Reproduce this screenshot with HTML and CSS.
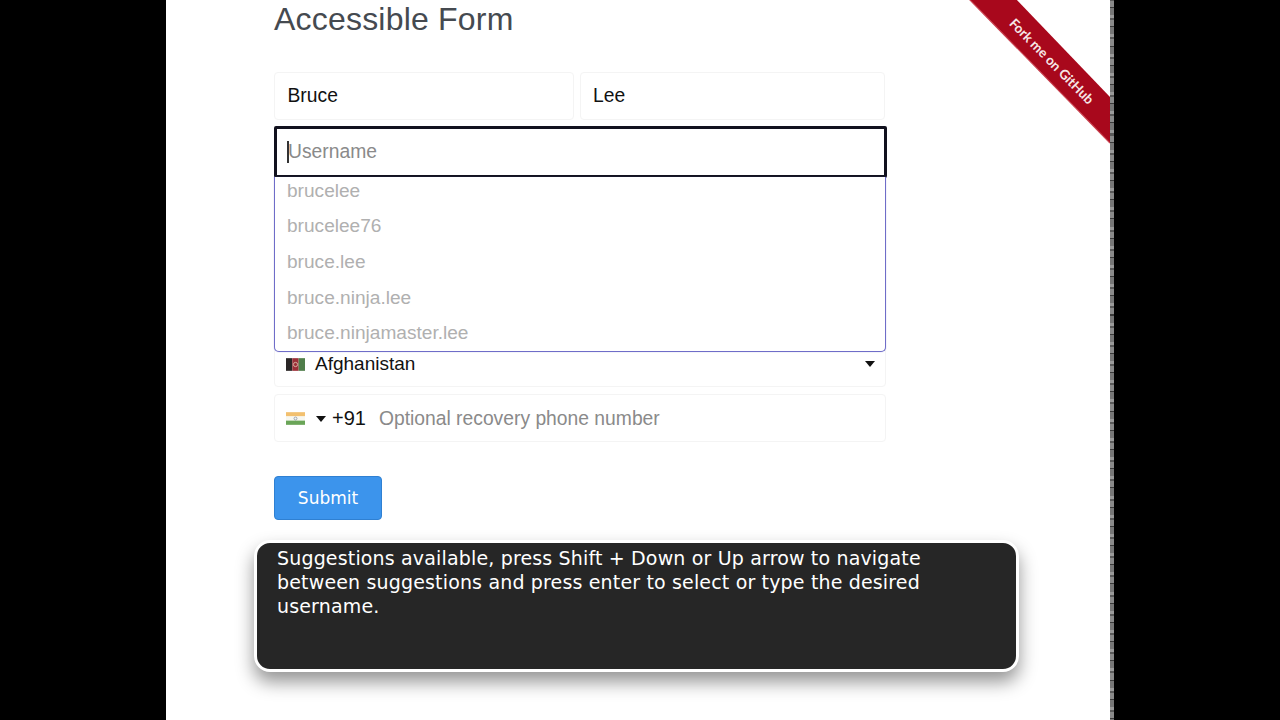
FILE: index.html
```html
<!DOCTYPE html>
<html lang="en">
<head>
<meta charset="utf-8">
<title>Accessible Form</title>
<link rel="stylesheet" href="styles.css">
</head>
<body>
<main class="page">
  <h1 class="title">Accessible Form</h1>
  <form class="form">
    <div class="row">
      <div class="field first-name">Bruce</div>
      <div class="field last-name">Lee</div>
    </div>
    <div class="username-wrap">
      <div class="username"><span class="caret"></span><span class="placeholder">Username</span></div>
      <ul class="suggestions">
        <li>brucelee</li>
        <li>brucelee76</li>
        <li>bruce.lee</li>
        <li>bruce.ninja.lee</li>
        <li>bruce.ninjamaster.lee</li>
      </ul>
    </div>
    <div class="field country">
      <svg class="flag" viewBox="0 0 18 12" aria-hidden="true">
        <rect width="6" height="12" fill="#2a2626"/>
        <rect x="6" width="6" height="12" fill="#9c2f38"/>
        <rect x="12" width="6" height="12" fill="#4f7d4a"/>
        <circle cx="9" cy="6" r="2" fill="none" stroke="#dcc2ae" stroke-width="0.8"/>
      </svg>
      <span class="country-name">Afghanistan</span>
      <span class="arrow arrow-end"></span>
    </div>
    <div class="field phone">
      <svg class="flag" viewBox="0 0 18 12" aria-hidden="true">
        <rect width="18" height="4" fill="#f2c06f"/>
        <rect y="4" width="18" height="4" fill="#f7f7ef"/>
        <rect y="8" width="18" height="4" fill="#6aa558"/>
        <circle cx="9" cy="6" r="1.4" fill="none" stroke="#5a6a8a" stroke-width="0.5"/>
      </svg>
      <span class="arrow"></span>
      <span class="dial">+91</span>
      <span class="placeholder">Optional recovery phone number</span>
    </div>
    <button class="submit" type="button">Submit</button>
  </form>

  <a class="ribbon" href="#" aria-label="Fork me on GitHub">
    <svg viewBox="0 0 150 150" width="150" height="150">
      <polygon points="8,-2 55,-2 150,97 150,143" fill="#a8081c"/>
      <polyline points="8,-2 150,143" fill="none" stroke="#c9424f" stroke-width="1.2"/>
      <text class="ribbon-text" x="91.5" y="66" text-anchor="middle" transform="rotate(45.5 91.5 61.5)">Fork me on GitHub</text>
    </svg>
  </a>

  <div class="tooltip">Suggestions available, press Shift + Down or Up arrow to navigate between suggestions and press enter to select or type the desired username.</div>
</main>
</body>
</html>
```
FILE: styles.css
```css
* { box-sizing: border-box; }

html, body {
  margin: 0;
  height: 720px;
  overflow: hidden;
  background: #000;
}

body {
  font-family: "Liberation Sans", Arial, sans-serif;
  color: #111;
}

.page {
  position: relative;
  width: 948px;
  height: 720px;
  margin-left: 166px;
  padding-left: 108px;
  background: #fff;
  border-right: 4px solid #777;
  border-image: repeating-linear-gradient(#9a9a9a 0 3px, #5a5a5a 3px 5px, #8a8a8a 5px 11px, #3a3a3a 11px 12px, #777 12px 19px) 4;
}

.title {
  margin: 0;
  height: 72px;
  font-size: 32px;
  line-height: 38px;
  font-weight: 400;
  letter-spacing: 0.2px;
  color: #454a50;
}

.form {
  display: flex;
  flex-direction: column;
  align-items: flex-start;
  width: 613px;
}

.row {
  display: flex;
  gap: 6px;
  width: 611px;
}

.field {
  display: flex;
  align-items: center;
  height: 48px;
  padding-left: 12.5px;
  font-size: 19.3px;
  background: #fff;
  border: 1px solid #f4f4f4;
  border-radius: 4px;
}

.first-name { width: 300px; }
.last-name { width: 305px; padding-left: 12px; }

.username-wrap {
  position: relative;
  height: 213px;
  margin-top: 6px;
}

.username {
  display: flex;
  align-items: center;
  width: 613px;
  height: 52px;
  padding: 0 0 0 10px;
  font-size: 19.3px;
  background: #fff;
  border: 3px solid #12121f;
  border-radius: 2px;
}

.caret {
  width: 2px;
  height: 22px;
  margin-right: -1px;
  background: #333;
}

.placeholder { color: #8a8a8a; }

.suggestions {
  position: absolute;
  top: 51px;
  left: 0;
  width: 612px;
  height: 175px;
  margin: 0;
  padding: 1.5px 0 0 12px;
  list-style: none;
  font-size: 19.1px;
  color: #b0b0b0;
  background: #fff;
  border: 1px solid #6f6dc8;
  border-top: 0;
  border-radius: 0 0 5px 5px;
  box-shadow: 0 0 1px rgba(111, 109, 200, 0.7);
}

.suggestions li {
  height: 35.7px;
  line-height: 24px;
}

.country,
.phone {
  width: 612px;
  padding: 1px 0 0 11px;
}

.country { padding-top: 2px; }

.phone { margin-top: 7px; }

.flag {
  flex: none;
  width: 19px;
  height: 13px;
}

.country-name { margin-left: 10px; font-size: 19px; }

.arrow {
  flex: none;
  width: 0;
  height: 0;
  margin-left: 11px;
  border-left: 5.5px solid transparent;
  border-right: 5.5px solid transparent;
  border-top: 6px solid #111;
}

.arrow-end { margin-left: auto; margin-right: 10px; }

.dial { margin-left: 6px; margin-right: 13px; font-size: 20px; }

.submit {
  width: 108px;
  height: 44px;
  margin-top: 34px;
  padding: 0;
  font-family: "DejaVu Sans", sans-serif;
  font-size: 17px;
  color: #fff;
  background: #3c94ec;
  border: 1px solid #2f80d2;
  border-radius: 4px;
}

.ribbon {
  position: absolute;
  top: 0;
  right: 0;
  width: 150px;
  height: 150px;
  text-decoration: none;
}

.ribbon-text {
  font-family: Lato, sans-serif;
  font-size: 13.4px;
  font-weight: 700;
  fill: #f6e6e6;
}

.tooltip {
  position: absolute;
  top: 540px;
  left: 88px;
  width: 765px;
  height: 132px;
  padding: 3px 20px;
  font-family: "DejaVu Sans", sans-serif;
  font-size: 19px;
  line-height: 24px;
  letter-spacing: 0.16px;
  color: #fff;
  background: #262626;
  border: 3px solid #fff;
  border-radius: 16px;
  box-shadow: 0 10px 18px rgba(0, 0, 0, 0.42);
}
```
